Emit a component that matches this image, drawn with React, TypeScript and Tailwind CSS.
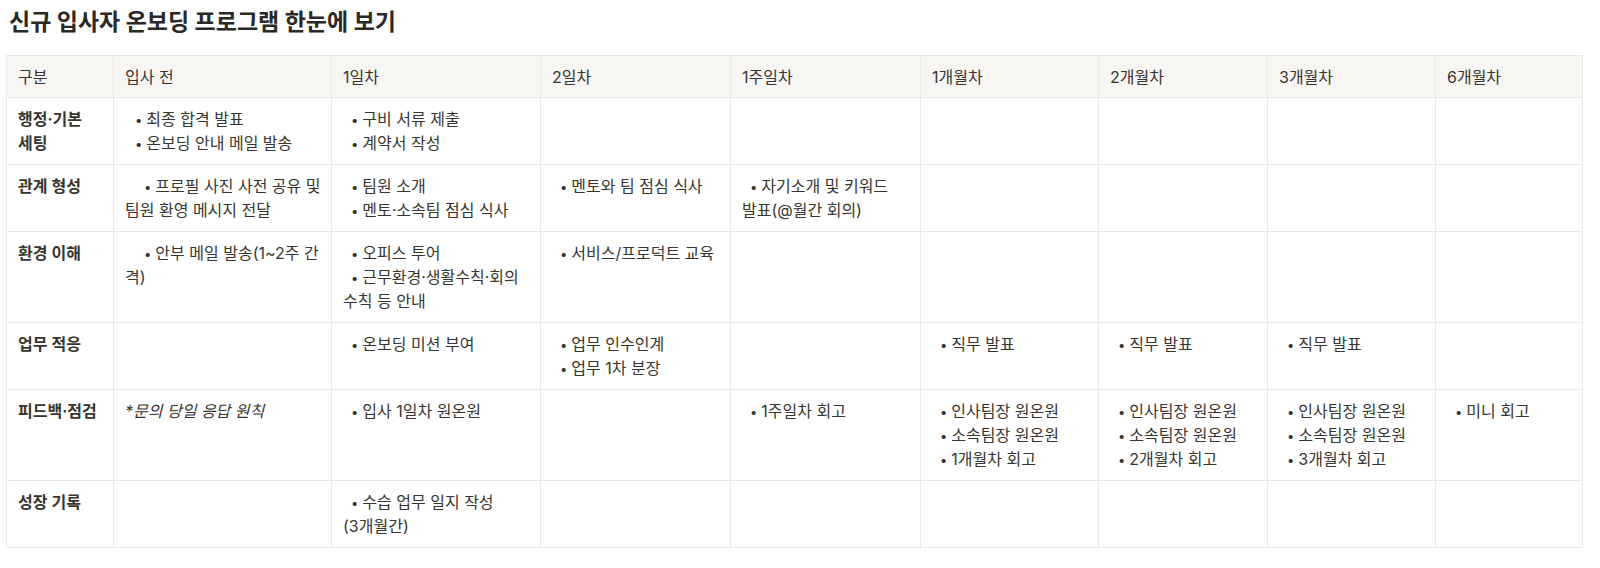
type Line = {
  text: string;
  bullet?: boolean;
  indent?: number;
  italic?: boolean;
};

type Row = {
  label: string[];
  cells: Line[][];
};

const columns = [
  "구분",
  "입사 전",
  "1일차",
  "2일차",
  "1주일차",
  "1개월차",
  "2개월차",
  "3개월차",
  "6개월차",
];

const b = (text: string, indent = 8): Line => ({ text, bullet: true, indent });
const t = (text: string): Line => ({ text });

const rows: Row[] = [
  {
    label: ["행정·기본", "세팅"],
    cells: [
      [b("최종 합격 발표", 10), b("온보딩 안내 메일 발송", 10)],
      [b("구비 서류 제출"), b("계약서 작성")],
      [],
      [],
      [],
      [],
      [],
      [],
    ],
  },
  {
    label: ["관계 형성"],
    cells: [
      [b("프로필 사진 사전 공유 및", 19), t("팀원 환영 메시지 전달")],
      [b("팀원 소개"), b("멘토·소속팀 점심 식사")],
      [b("멘토와 팀 점심 식사")],
      [b("자기소개 및 키워드"), t("발표(@월간 회의)")],
      [],
      [],
      [],
      [],
    ],
  },
  {
    label: ["환경 이해"],
    cells: [
      [b("안부 메일 발송(1~2주 간", 19), t("격)")],
      [b("오피스 투어"), b("근무환경·생활수칙·회의"), t("수칙 등 안내")],
      [b("서비스/프로덕트 교육")],
      [],
      [],
      [],
      [],
      [],
    ],
  },
  {
    label: ["업무 적응"],
    cells: [
      [],
      [b("온보딩 미션 부여")],
      [b("업무 인수인계"), b("업무 1차 분장")],
      [],
      [b("직무 발표")],
      [b("직무 발표")],
      [b("직무 발표")],
      [],
    ],
  },
  {
    label: ["피드백·점검"],
    cells: [
      [{ text: "*문의 당일 응답 원칙", italic: true }],
      [b("입사 1일차 원온원")],
      [],
      [b("1주일차 회고")],
      [b("인사팀장 원온원"), b("소속팀장 원온원"), b("1개월차 회고")],
      [b("인사팀장 원온원"), b("소속팀장 원온원"), b("2개월차 회고")],
      [b("인사팀장 원온원"), b("소속팀장 원온원"), b("3개월차 회고")],
      [b("미니 회고")],
    ],
  },
  {
    label: ["성장 기록"],
    cells: [
      [],
      [b("수습 업무 일지 작성"), t("(3개월간)")],
      [],
      [],
      [],
      [],
      [],
      [],
    ],
  },
];

function CellLine({ line }: { line: Line }) {
  if (line.bullet) {
    return (
      <div className="h-6 whitespace-nowrap">
        <span className="text-[13px]" style={{ paddingLeft: line.indent }}>
          •
        </span>
        <span className="pl-[4px]">{line.text}</span>
      </div>
    );
  }
  return (
    <div className={line.italic ? "h-6 whitespace-nowrap italic" : "h-6 whitespace-nowrap"}>
      {line.text}
    </div>
  );
}

export default function App() {
  return (
    <div
      className="min-h-screen bg-white px-[6px] text-[#37352f]"
      style={{ fontFamily: "Inter, 'Noto Sans CJK KR', sans-serif" }}
    >
      {/* Title */}
      <h1 className="h-[55px] pl-[3px] pt-[6px] text-[23px] font-bold leading-[32px] text-[#2a2925]">
        신규 입사자 온보딩 프로그램 한눈에 보기
      </h1>

      {/* Table */}
      <div className="grid w-max grid-cols-[107px_218px_209px_190px_190px_178px_169px_168px_147px] border-l border-t border-[#e9e9e7] text-[16px] leading-6">
        {columns.map((col) => (
          <div
            key={col}
            className="h-[42px] border-b border-r border-[#e9e9e7] bg-[#f7f6f3] px-[11px] pt-[9px]"
          >
            {col}
          </div>
        ))}

        {rows.map((row) => (
          <div key={row.label.join("")} className="contents">
            <div className="min-h-[67px] border-b border-r border-[#e9e9e7] px-[11px] py-[9px] font-semibold">
              {row.label.map((l) => (
                <div key={l} className="h-6 whitespace-nowrap">
                  {l}
                </div>
              ))}
            </div>
            {row.cells.map((cell, i) => (
              <div
                key={i}
                className="min-h-[67px] border-b border-r border-[#e9e9e7] px-[11px] py-[9px]"
              >
                {cell.map((line, j) => (
                  <CellLine key={j} line={line} />
                ))}
              </div>
            ))}
          </div>
        ))}
      </div>
    </div>
  );
}
